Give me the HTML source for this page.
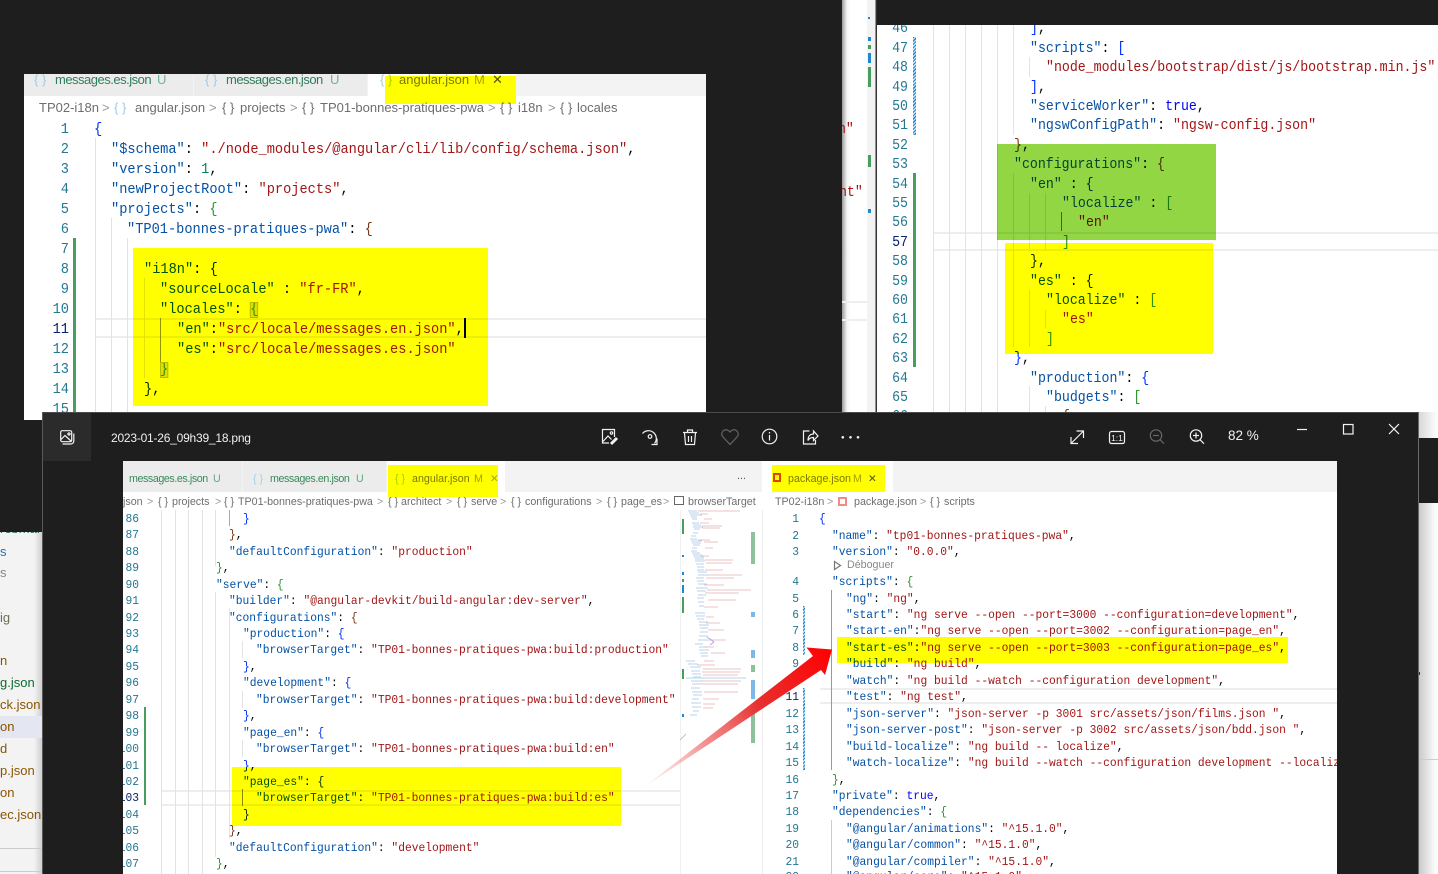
<!DOCTYPE html>
<html lang="en"><head><meta charset="utf-8"><title>Screenshot</title>
<style>
html,body{margin:0;padding:0;background:#1e1e1e;width:1438px;height:874px;overflow:hidden}
*{box-sizing:border-box}
#root{position:absolute;left:0;top:0;width:1438px;height:874px;overflow:hidden;background:#1e1e1e}
.c{position:absolute;left:0;top:0;width:1438px;height:874px}
.r{position:absolute}
p{position:absolute;margin:0;white-space:pre;font-family:"Liberation Mono",monospace;transform:scaleX(.917);transform-origin:0 0;color:#000}
p.n{width:40px;text-align:right;transform-origin:100% 0;color:#237893}
.p1 p{font-size:14.9px;line-height:20px;margin-top:2px}
.p2 p{font-size:14.45px;line-height:19.4px;margin-top:2.500px}
.p3 p{font-size:12.3px;line-height:16px;margin-top:1px}
i,s,em,u,b,tt{font:inherit;font-style:normal;font-weight:normal;text-decoration:none}
i{color:#0451a5}s{color:#a31515}em{color:#0000ff}u{color:#0431fa}b{color:#319331}tt{color:#7b3814}
.t{position:absolute;white-space:pre;font-family:"Liberation Sans",sans-serif;line-height:18px;color:#6e6e6e}
.f13 .t{font-size:13px;margin-top:1px}.f11 .t{font-size:10.7px;margin-top:1px}
.f13 .t.nr{letter-spacing:-.5px}.f11 .t.nr{letter-spacing:-.42px}
.m{position:absolute;mix-blend-mode:multiply}
.g{position:absolute;width:1px;background:#e3e3e3}
.side{position:absolute;left:0;font:13px/18px "Liberation Sans",sans-serif;white-space:pre}
</style></head><body><div id="root">

<!-- window behind, far right strip -->
<div class="r" style="left:842px;top:0;width:35px;height:420px;background:linear-gradient(90deg,#9a9a9a 0,#f4f4f4 5px,#fff 9px,#fff 25px,#f3f3f3 25px,#f3f3f3 33px,#333 34px)"></div>
<div class="r" style="left:842px;top:301px;width:25px;height:2px;background:#eee"></div>
<div class="r" style="left:842px;top:319px;width:25px;height:2px;background:#eee"></div>
<div class="r" style="left:868px;top:17px;width:2px;height:2px;background:#1e88d0"></div>
<div class="r" style="left:868px;top:37px;width:3px;height:4px;background:#1e88d0"></div>
<div class="r" style="left:868px;top:45px;width:3px;height:4px;background:#489e5e"></div>
<div class="r" style="left:868px;top:53px;width:3px;height:10px;background:#1e88d0"></div>
<div class="r" style="left:868px;top:67px;width:3px;height:20px;background:#489e5e"></div>
<div class="r" style="left:868px;top:155px;width:3px;height:12px;background:#489e5e"></div>
<div class="r" style="left:868px;top:209px;width:3px;height:4px;background:#1e88d0"></div>
<div class="c" style="clip-path:inset(0 571px 0 842px)"><div class="p2"><p style="left:830px;top:118px"><s>on"</s></p><p style="left:831px;top:181.500px"><s>ent"</s></p></div></div>

<!-- PANEL 1 -->
<div class="c f13 p1" style="clip-path:inset(74px 732px 454px 24px)">
<div class="r" style="left:24px;top:74px;width:682px;height:346px;background:#fff"></div>
<div class="r" style="left:24px;top:74px;width:682px;height:22px;background:#f3f3f3"></div>
<div class="r" style="left:24px;top:74px;width:169px;height:22px;background:#ececec"></div>
<div class="r" style="left:194px;top:74px;width:173px;height:22px;background:#ececec"></div>
<div class="r" style="left:368px;top:74px;width:148px;height:22px;background:#fff"></div>
<div class="t" style="left:34px;top:70px;color:#9fcbe6">{ }</div>
<div class="t nr" style="left:55px;top:70px;color:#2e7d5a">messages.es.json</div>
<div class="t" style="left:157px;top:70px;color:#73b48c">U</div>
<div class="t" style="left:205px;top:70px;color:#9fcbe6">{ }</div>
<div class="t nr" style="left:226px;top:70px;color:#2e7d5a">messages.en.json</div>
<div class="t" style="left:330px;top:70px;color:#73b48c">U</div>
<div class="t" style="left:380px;top:70px;color:#b0cfc0">{ }</div>
<div class="t" style="left:399px;top:70px;color:#7a7a7a">angular.json</div>
<div class="t" style="left:474px;top:70px;color:#b0a060">M</div>
<div class="t" style="left:492px;top:70px;color:#555">✕</div>

<div class="t" style="left:39px;top:98px">TP02-i18n</div>
<div class="t" style="left:102px;top:98px;color:#999">&gt;</div>
<div class="t" style="left:114px;top:98px;color:#9fcbe6">{ }</div>
<div class="t" style="left:135px;top:98px">angular.json</div>
<div class="t" style="left:209px;top:98px;color:#999">&gt;</div>
<div class="t" style="left:222px;top:98px">{ }</div>
<div class="t" style="left:240px;top:98px">projects</div>
<div class="t" style="left:290px;top:98px;color:#999">&gt;</div>
<div class="t" style="left:302px;top:98px">{ }</div>
<div class="t" style="left:320px;top:98px">TP01-bonnes-pratiques-pwa</div>
<div class="t" style="left:488px;top:98px;color:#999">&gt;</div>
<div class="t" style="left:500px;top:98px">{ }</div>
<div class="t" style="left:518px;top:98px">i18n</div>
<div class="t" style="left:548px;top:98px;color:#999">&gt;</div>
<div class="t" style="left:560px;top:98px">{ }</div>
<div class="t" style="left:577px;top:98px">locales</div>

<div class="r" style="left:95px;top:318px;width:611px;height:20px;border-top:2px solid #eee;border-bottom:2px solid #eee"></div>
<div class="g" style="left:95px;top:138px;height:280px"></div>
<div class="g" style="left:111px;top:218px;height:200px"></div>
<div class="g" style="left:127px;top:238px;height:180px"></div>
<div class="g" style="left:144px;top:278px;height:100px"></div>
<div class="g" style="left:160px;top:318px;height:60px;background:#939393"></div>
<div class="r" style="left:73px;top:238px;width:3px;height:180px;background:#489e5e"></div>

<p class="n" style="left:29px;top:118px">1</p><p class="n" style="left:29px;top:138px">2</p><p class="n" style="left:29px;top:158px">3</p><p class="n" style="left:29px;top:178px">4</p><p class="n" style="left:29px;top:198px">5</p><p class="n" style="left:29px;top:218px">6</p><p class="n" style="left:29px;top:238px">7</p><p class="n" style="left:29px;top:258px">8</p><p class="n" style="left:29px;top:278px">9</p><p class="n" style="left:29px;top:298px">10</p><p class="n" style="left:29px;top:318px;color:#0b216f">11</p><p class="n" style="left:29px;top:338px">12</p><p class="n" style="left:29px;top:358px">13</p><p class="n" style="left:29px;top:378px">14</p><p class="n" style="left:29px;top:398px">15</p>

<p style="left:94px;top:118px"><u>{</u></p>
<p style="left:111px;top:138px"><i>"$schema"</i>: <s>"./node_modules/@angular/cli/lib/config/schema.json"</s>,</p>
<p style="left:111px;top:158px"><i>"version"</i>: <tt style="color:#098658">1</tt>,</p>
<p style="left:111px;top:178px"><i>"newProjectRoot"</i>: <s>"projects"</s>,</p>
<p style="left:111px;top:198px"><i>"projects"</i>: <b>{</b></p>
<p style="left:127px;top:218px"><i>"TP01-bonnes-pratiques-pwa"</i>: <tt>{</tt></p>
<p style="left:144px;top:258px"><i>"i18n"</i>: <u>{</u></p>
<p style="left:160px;top:278px"><i>"sourceLocale"</i> : <s>"fr-FR"</s>,</p>
<p style="left:160px;top:298px"><i>"locales"</i>: <b style="background:#dedede;outline:1px solid #b9b9b9;outline-offset:-1px">{</b></p>
<p style="left:177px;top:318px"><i>"en"</i>:<s>"src/locale/messages.en.json"</s>,</p>
<p style="left:177px;top:338px"><i>"es"</i>:<s>"src/locale/messages.es.json"</s></p>
<p style="left:160px;top:358px"><b style="background:#dedede;outline:1px solid #b9b9b9;outline-offset:-1px">}</b></p>
<p style="left:144px;top:378px"><u>}</u>,</p>
<div class="r" style="left:464px;top:318px;width:2px;height:20px;background:#000"></div>
<div class="m" style="left:385px;top:76px;width:131px;height:28px;background:#ff0"></div>
<div class="m" style="left:133px;top:248px;width:355px;height:158px;background:#ff0"></div>
</div>

<!-- PANEL 2 -->
<div class="c p2" style="clip-path:inset(25px 0 436px 877px)">
<div class="r" style="left:877px;top:25px;width:561px;height:414px;background:#fff"></div>
<div class="r" style="left:933px;top:232px;width:505px;height:19px;border-top:2px solid #eee;border-bottom:2px solid #eee"></div>
<div class="g" style="left:933px;top:25px;height:390px"></div><div class="g" style="left:949px;top:25px;height:390px"></div><div class="g" style="left:965px;top:25px;height:390px"></div><div class="g" style="left:981px;top:25px;height:390px"></div><div class="g" style="left:997px;top:25px;height:390px"></div>
<div class="g" style="left:1013px;top:25px;height:110px"></div><div class="g" style="left:1013px;top:173px;height:174px"></div>
<div class="g" style="left:1029px;top:57px;height:20px"></div><div class="g" style="left:1029px;top:193px;height:58px"></div><div class="g" style="left:1029px;top:290px;height:57px"></div><div class="g" style="left:1029px;top:386px;height:30px"></div>
<div class="g" style="left:1045px;top:193px;height:57px"></div><div class="g" style="left:1045px;top:310px;height:18px"></div><div class="g" style="left:1045px;top:406px;height:10px"></div>
<div class="g" style="left:1061px;top:212px;height:19px;background:#777"></div>
<div class="r" style="left:913px;top:37px;width:3px;height:98px;background:repeating-linear-gradient(135deg,#1e88d0 0 1.2px,#cfe7f7 1.2px 2.4px)"></div>
<div class="r" style="left:913px;top:173px;width:3px;height:194px;background:#489e5e"></div>

<p class="n" style="left:868px;top:17.900px">46</p><p class="n" style="left:868px;top:37.300px">47</p><p class="n" style="left:868px;top:56.700px">48</p><p class="n" style="left:868px;top:76.100px">49</p><p class="n" style="left:868px;top:95.500px">50</p><p class="n" style="left:868px;top:114.900px">51</p><p class="n" style="left:868px;top:134.300px">52</p><p class="n" style="left:868px;top:153.700px">53</p><p class="n" style="left:868px;top:173.100px">54</p><p class="n" style="left:868px;top:192.500px">55</p><p class="n" style="left:868px;top:211.900px">56</p><p class="n" style="left:868px;top:231.300px;color:#0b216f">57</p><p class="n" style="left:868px;top:250.700px">58</p><p class="n" style="left:868px;top:270.100px">59</p><p class="n" style="left:868px;top:289.500px">60</p><p class="n" style="left:868px;top:308.900px">61</p><p class="n" style="left:868px;top:328.300px">62</p><p class="n" style="left:868px;top:347.700px">63</p><p class="n" style="left:868px;top:367.100px">64</p><p class="n" style="left:868px;top:386.500px">65</p><p class="n" style="left:868px;top:405.900px">66</p>

<p style="left:1030px;top:17.900px"><u>]</u>,</p>
<p style="left:1030px;top:37.300px"><i>"scripts"</i>: <u>[</u></p>
<p style="left:1046px;top:56.700px"><s>"node_modules/bootstrap/dist/js/bootstrap.min.js"</s></p>
<p style="left:1030px;top:76.100px"><u>]</u>,</p>
<p style="left:1030px;top:95.500px"><i>"serviceWorker"</i>: <em>true</em>,</p>
<p style="left:1030px;top:114.900px"><i>"ngswConfigPath"</i>: <s>"ngsw-config.json"</s></p>
<p style="left:1014px;top:134.300px"><tt>}</tt>,</p>
<p style="left:1014px;top:153.700px"><i>"configurations"</i>: <tt>{</tt></p>
<p style="left:1030px;top:173.100px"><i>"en"</i> : <u>{</u></p>
<p style="left:1062px;top:192.500px"><i>"localize"</i> : <b>[</b></p>
<p style="left:1078px;top:211.900px"><s>"en"</s></p>
<p style="left:1062px;top:231.300px"><b>]</b></p>
<p style="left:1030px;top:250.700px"><u>}</u>,</p>
<p style="left:1030px;top:270.100px"><i>"es"</i> : <u>{</u></p>
<p style="left:1046px;top:289.500px"><i>"localize"</i> : <b>[</b></p>
<p style="left:1062px;top:308.900px"><s>"es"</s></p>
<p style="left:1046px;top:328.300px"><b>]</b></p>
<p style="left:1014px;top:347.700px"><u>}</u>,</p>
<p style="left:1030px;top:367.100px"><i>"production"</i>: <u>{</u></p>
<p style="left:1046px;top:386.500px"><i>"budgets"</i>: <b>[</b></p>
<p style="left:1062px;top:405.900px"><tt>{</tt></p>
<div class="m" style="left:997px;top:144px;width:219px;height:96px;background:#93d644"></div>
<div class="m" style="left:1005px;top:243px;width:208px;height:111px;background:#ff0"></div>
</div>

<!-- behind, left sidebar -->
<div class="r" style="left:0;top:532px;width:42px;height:342px;background:linear-gradient(90deg,#f3f3f3 0,#f3f3f3 34px,#cfcfcf 42px);overflow:hidden">
<div class="r" style="left:0;top:184px;width:42px;height:22px;background:#e4e6f1"></div>
<div class="r" style="left:0;top:316px;width:42px;height:1px;background:#ccc"></div>
<div class="r" style="left:0;top:339px;width:42px;height:1px;background:#ccc"></div>
<div class="side" style="top:-12px;color:#2c6c4a">rebman</div>
<div class="side" style="top:11px;color:#2272b5">s</div>
<div class="side" style="top:32px;color:#888">s</div>
<div class="side" style="top:77px;color:#6f6f55">ig</div>
<div class="side" style="top:120px;color:#895503">n</div>
<div class="side" style="top:142px;color:#106a2e">g.json</div>
<div class="side" style="top:164px;color:#895503">ck.json</div>
<div class="side" style="top:186px;color:#895503">on</div>
<div class="side" style="top:208px;color:#895503">d</div>
<div class="side" style="top:230px;color:#895503">p.json</div>
<div class="side" style="top:252px;color:#895503">on</div>
<div class="side" style="top:274px;color:#895503">ec.json</div>
</div>

<!-- right behind -->
<div class="r" style="left:1418px;top:412px;width:20px;height:26px;background:linear-gradient(90deg,#d6d6d6,#fff)"></div>
<div class="r" style="left:1418px;top:438px;width:20px;height:65px;background:#1e1e1e"></div>
<div class="r" style="left:1418px;top:503px;width:20px;height:371px;background:linear-gradient(90deg,#c6c6c6,#f8f8f8 16px,#fff)"></div>
<div class="r" style="left:1418px;top:759px;width:20px;height:1px;background:#ccc"></div>
<div class="r" style="left:1418px;top:672px;width:2px;height:3px;background:#003b9c"></div>

<!-- PHOTOS WINDOW -->
<div class="r" style="left:42px;top:412px;width:1377px;height:462px;background:#1e1e1e;border-top:1px solid #4a4a4a;border-left:1px solid #5a5a5a;border-right:1px solid #6a6a6a"></div>
<div class="r" style="left:43px;top:413px;width:48px;height:48px;background:#2b2b2b"></div>
<div class="t" style="left:111px;top:429px;color:#f0f0f0;font-size:12px;letter-spacing:-.22px">2023-01-26_09h39_18.png</div>
<div class="t" style="left:1228px;top:427px;color:#f0f0f0;font-size:13.5px">82 %</div>

<svg class="c" width="1438" height="874" viewBox="0 0 1438 874" fill="none" stroke="#f2f2f2" stroke-width="1.2">
<rect x="60.700" y="430.700" width="11" height="11" rx="1.500"/><path d="M73.800 433.500v7.500a3 3 0 0 1-3 3H62.500M61 439.500l4-4 6.500 6M69 432v4M67 434h4"/>
<path d="M614.500 437V429.500H602.500V443H609M603 441.500l5-5.500 3.500 3.500"/><circle cx="611.500" cy="433" r="1.200"/><path d="M611 444l6-6" stroke-width="3"/>
<path d="M642.500 433.500A7.700 7.700 0 1 1 654.500 443.500"/><circle cx="650" cy="436.500" r="1.800"/><path d="M657 438.500v6h-5.500"/>
<path d="M683 432.500h14M687.500 432v-2h5v2M684.500 433l1 11.500h9l1-11.500M688.500 436v6M691.500 436v6"/>
<path d="M730 444.500l-7-7.500a4.200 4.200 0 0 1 6-6l1 1 1-1a4.200 4.200 0 0 1 6 6z" stroke="#666"/>
<circle cx="769.500" cy="436.500" r="7.300"/><path d="M769.500 435v5.500M769.500 432v1.500"/>
<path d="M809.500 431h-6v13h12v-4M808 440.500c0-4 2-6.500 5.500-6.500v-3l4.500 5-4.500 4.500v-3c-2.500 0-4.500 1-5.500 3z"/>
<g fill="#f2f2f2" stroke="none"><circle cx="842.800" cy="437.300" r="1.300"/><circle cx="850.500" cy="437.300" r="1.300"/><circle cx="858" cy="437.300" r="1.300"/></g>
<path d="M1071 443.500L1083.500 431M1076.500 431h7v7M1071 437v6.500h7"/>
<rect x="1109.500" y="431.500" width="15" height="12" rx="2"/>
<text x="1117" y="441" text-anchor="middle" font-family="Liberation Sans, sans-serif" font-size="8.500" fill="#f2f2f2" stroke="none">1:1</text>
<g stroke="#666"><circle cx="1156" cy="435.500" r="5.700"/><path d="M1160 439.700l4 4M1153 435.500h6"/></g>
<circle cx="1196" cy="435.500" r="5.700"/><path d="M1200 439.700l4 4M1193 435.500h6M1196 432.500v6"/>
<path d="M1297 429.500h10"/><rect x="1343.500" y="424.500" width="9.500" height="9.500"/><path d="M1389 424l10 10M1399 424l-10 10"/>
</svg>

<!-- PANEL 3 -->
<div class="c f11 p3" style="clip-path:inset(461px 676px 0 123px)">
<div class="r" style="left:123px;top:461px;width:640px;height:413px;background:#fff"></div>
<div class="r" style="left:123px;top:461px;width:640px;height:31px;background:#f3f3f3"></div>
<div class="r" style="left:123px;top:461px;width:119px;height:31px;background:#ececec"></div>
<div class="r" style="left:243px;top:461px;width:143px;height:31px;background:#ececec"></div>
<div class="r" style="left:387px;top:461px;width:118px;height:31px;background:#fff"></div>
<div class="t nr" style="left:129px;top:469px;color:#388a5a">messages.es.json</div>
<div class="t" style="left:213px;top:469px;color:#5ca97b">U</div>
<div class="t" style="left:253px;top:469px;color:#9fd3ea">{ }</div>
<div class="t nr" style="left:270px;top:469px;color:#388a5a">messages.en.json</div>
<div class="t" style="left:356px;top:469px;color:#5ca97b">U</div>
<div class="t" style="left:395px;top:469px;color:#9fd3ea">{ }</div>
<div class="t" style="left:412px;top:469px;color:#7a7a7a">angular.json</div>
<div class="t" style="left:474px;top:469px;color:#a89c60">M</div>
<div class="t" style="left:490px;top:469px;color:#aaa">✕</div>
<div class="t" style="left:737px;top:466px;color:#555">...</div>

<div class="t" style="left:123px;top:492px">json</div><div class="t" style="left:147px;top:492px;color:#999">&gt;</div>
<div class="t" style="left:158px;top:492px">{ }</div><div class="t" style="left:172px;top:492px">projects</div><div class="t" style="left:215px;top:492px;color:#999">&gt;</div>
<div class="t" style="left:224px;top:492px">{ }</div><div class="t" style="left:238px;top:492px">TP01-bonnes-pratiques-pwa</div><div class="t" style="left:377px;top:492px;color:#999">&gt;</div>
<div class="t" style="left:388px;top:492px">{ }</div><div class="t" style="left:401px;top:492px">architect</div><div class="t" style="left:446px;top:492px;color:#999">&gt;</div>
<div class="t" style="left:457px;top:492px">{ }</div><div class="t" style="left:471px;top:492px">serve</div><div class="t" style="left:500px;top:492px;color:#999">&gt;</div>
<div class="t" style="left:511px;top:492px">{ }</div><div class="t" style="left:525px;top:492px">configurations</div><div class="t" style="left:596px;top:492px;color:#999">&gt;</div>
<div class="t" style="left:607px;top:492px">{ }</div><div class="t" style="left:621px;top:492px">page_es</div><div class="t" style="left:663px;top:492px;color:#999">&gt;</div>
<div class="r" style="left:674px;top:496px;width:10px;height:9px;border:1px solid #666"></div><div class="t" style="left:688px;top:492px">browserTarget</div>

<div class="r" style="left:161px;top:790px;width:519px;height:16px;border-top:2px solid #eee;border-bottom:2px solid #eee"></div>
<div class="g" style="left:161px;top:510px;height:364px"></div><div class="g" style="left:175px;top:510px;height:364px"></div><div class="g" style="left:188px;top:510px;height:364px"></div><div class="g" style="left:202px;top:510px;height:364px"></div>
<div class="g" style="left:215px;top:510px;height:56px"></div><div class="g" style="left:215px;top:592px;height:265px"></div>
<div class="g" style="left:229px;top:510px;height:16px;background:#aaa"></div><div class="g" style="left:229px;top:608px;height:230px"></div>
<div class="g" style="left:242px;top:641px;height:17px"></div><div class="g" style="left:242px;top:691px;height:17px"></div><div class="g" style="left:242px;top:740px;height:17px"></div><div class="g" style="left:242px;top:789px;height:17px;background:#888"></div>
<div class="r" style="left:144px;top:707px;width:2px;height:98px;background:#489e5e"></div>

<p class="n" style="left:99px;top:510px">86</p><p class="n" style="left:99px;top:526.400px">87</p><p class="n" style="left:99px;top:542.900px">88</p><p class="n" style="left:99px;top:559.300px">89</p><p class="n" style="left:99px;top:575.700px">90</p><p class="n" style="left:99px;top:592.200px">91</p><p class="n" style="left:99px;top:608.600px">92</p><p class="n" style="left:99px;top:625px">93</p><p class="n" style="left:99px;top:641.400px">94</p><p class="n" style="left:99px;top:657.900px">95</p><p class="n" style="left:99px;top:674.300px">96</p><p class="n" style="left:99px;top:690.700px">97</p><p class="n" style="left:99px;top:707.200px">98</p><p class="n" style="left:99px;top:723.600px">99</p><p class="n" style="left:99px;top:740px">100</p><p class="n" style="left:99px;top:756.500px">101</p><p class="n" style="left:99px;top:772.900px">102</p><p class="n" style="left:99px;top:789.300px;color:#0b216f">103</p><p class="n" style="left:99px;top:805.700px">104</p><p class="n" style="left:99px;top:822.200px">105</p><p class="n" style="left:99px;top:838.600px">106</p><p class="n" style="left:99px;top:855px">107</p>

<p style="left:243px;top:510px"><u>}</u></p>
<p style="left:229px;top:526.400px"><tt>}</tt>,</p>
<p style="left:229px;top:542.900px"><i>"defaultConfiguration"</i>: <s>"production"</s></p>
<p style="left:216px;top:559.300px"><b>}</b>,</p>
<p style="left:216px;top:575.700px"><i>"serve"</i>: <b>{</b></p>
<p style="left:229px;top:592.200px"><i>"builder"</i>: <s>"@angular-devkit/build-angular:dev-server"</s>,</p>
<p style="left:229px;top:608.600px"><i>"configurations"</i>: <tt>{</tt></p>
<p style="left:243px;top:625px"><i>"production"</i>: <u>{</u></p>
<p style="left:256px;top:641.400px"><i>"browserTarget"</i>: <s>"TP01-bonnes-pratiques-pwa:build:production"</s></p>
<p style="left:243px;top:657.900px"><u>}</u>,</p>
<p style="left:243px;top:674.300px"><i>"development"</i>: <u>{</u></p>
<p style="left:256px;top:690.700px"><i>"browserTarget"</i>: <s>"TP01-bonnes-pratiques-pwa:build:development"</s></p>
<p style="left:243px;top:707.200px"><u>}</u>,</p>
<p style="left:243px;top:723.600px"><i>"page_en"</i>: <u>{</u></p>
<p style="left:256px;top:740px"><i>"browserTarget"</i>: <s>"TP01-bonnes-pratiques-pwa:build:en"</s></p>
<p style="left:243px;top:756.500px"><u>}</u>,</p>
<p style="left:243px;top:772.900px"><i>"page_es"</i>: <u>{</u></p>
<p style="left:256px;top:789.300px"><i>"browserTarget"</i>: <s>"TP01-bonnes-pratiques-pwa:build:es"</s></p>
<p style="left:243px;top:805.700px"><u>}</u></p>
<p style="left:229px;top:822.200px"><tt>}</tt>,</p>
<p style="left:229px;top:838.600px"><i>"defaultConfiguration"</i>: <s>"development"</s></p>
<p style="left:216px;top:855px"><b>}</b>,</p>

<!-- minimap -->
<div class="r" style="left:680px;top:510px;width:83px;height:364px;background:#fff;border-left:1px solid #f0f0f0"></div>
<svg class="c" width="1438" height="874" viewBox="0 0 1438 874" fill="none" stroke-width=".8" opacity=".75">
<path stroke="#84acd6" d="M688 511h9M689 513h10M690 515h12M691 517h6M692 519h5M692 523h7M693 525h8M693 527h10M694 529h6M693 533h5M691 536h5M690 539h7M691 541h11M692 543h9M693 545h7M692 548h5M691 551h6M692 553h8M693 555h9M694 557h10M695 559h9M695 561h10M696 564h8M697 567h7M697 570h7M698 572h9M698 575h10M696 578h8M697 581h7M698 584h9M696 588h12M697 591h9M698 595h8M697 598h7M698 602h6M699 606h5M695 613h10M696 616h9M697 619h7M699 622h9M699 625h10M700 628h8M700 632h8M699 636h9M698 640h10M695 644h8M699 647h9M699 650h10M700 653h8M701 656h7M686 661h9M688 664h10M690 667h11M691 671h9M692 674h9M693 677h8M691 681h11M692 684h10M691 688h9M692 692h10M693 695h9M692 699h7M691 703h10M692 707h9M693 711h6M690 715h7"/>
<path stroke="#d69898" d="M698 511h42M700 514h8M704 519h8M700 523h9M702 526h20M702 528h18M698 540h12M704 542h14M705 548h8M701 556h8M705 560h28M706 563h26M705 570h18M708 575h34M706 578h28M704 585h20M707 590h44M705 593h34M708 600h28M704 607h14M706 617h8M706 623h14M708 630h16M708 640h18M704 647h10M711 653h14M704 661h10M697 665h18M703 669h38M702 672h38M703 675h35M701 681h40M702 684h36M704 692h34M703 699h16M703 704h12M703 708h10"/>
<path stroke="#8b7df0" d="M710 639l4 3M710 645l4-3M707 637l6 4"/>
<path stroke="#999" d="M686 734l-6 6"/>
<path stroke="#bcd9ef" d="M686 678h60" stroke-width="1.500"/>
</svg>
<div class="r" style="left:682px;top:519px;width:2px;height:15px;background:#489e5e"></div>
<div class="r" style="left:682px;top:555px;width:2px;height:2px;background:#1e88d0"></div>
<div class="r" style="left:682px;top:572px;width:2px;height:3px;background:#1e88d0"></div>
<div class="r" style="left:682px;top:579px;width:2px;height:3px;background:#489e5e"></div>
<div class="r" style="left:682px;top:585px;width:2px;height:8px;background:#1e88d0"></div>
<div class="r" style="left:682px;top:597px;width:2px;height:16px;background:#489e5e"></div>
<div class="r" style="left:682px;top:669px;width:2px;height:10px;background:#489e5e"></div>
<div class="r" style="left:682px;top:714px;width:2px;height:3px;background:#1e88d0"></div>
<div class="r" style="left:751px;top:532px;width:4px;height:32px;background:#8fc09c"></div>
<div class="r" style="left:751px;top:612px;width:4px;height:5px;background:#7db8e8"></div>
<div class="r" style="left:751px;top:650px;width:4px;height:8px;background:#7db8e8"></div>
<div class="r" style="left:751px;top:665px;width:4px;height:7px;background:#8fc09c"></div>
<div class="r" style="left:751px;top:680px;width:4px;height:19px;background:#7db8e8"></div>
<div class="r" style="left:751px;top:706px;width:4px;height:37px;background:#8fc09c"></div>
<div class="m" style="left:388px;top:465px;width:110px;height:32px;background:#ff0"></div>
<div class="m" style="left:232px;top:767px;width:389px;height:59px;background:#ff0"></div>
</div>

<!-- PANEL 4 -->
<div class="c f11 p3" style="clip-path:inset(461px 101px 0 762px)">
<div class="r" style="left:762px;top:461px;width:575px;height:413px;background:#fff"></div>
<div class="r" style="left:762px;top:461px;width:575px;height:31px;background:#f3f3f3"></div>
<div class="r" style="left:762px;top:461px;width:131px;height:31px;background:#fff"></div>
<div class="r" style="left:762px;top:510px;width:1px;height:364px;background:#eee"></div>
<div class="r" style="left:773px;top:473px;width:8px;height:9px;border:2px solid #e0412c;border-top-width:2px;background:#fff"></div>
<div class="t" style="left:788px;top:469px;color:#7a7a7a">package.json</div>
<div class="t" style="left:853px;top:469px;color:#a89c60">M</div>
<div class="t" style="left:868px;top:469px;color:#555">✕</div>
<div class="t" style="left:775px;top:492px">TP02-i18n</div><div class="t" style="left:827px;top:492px;color:#999">&gt;</div>
<div class="r" style="left:838px;top:497px;width:9px;height:9px;border:2px solid #f28a8a;background:#fff"></div>
<div class="t" style="left:854px;top:492px">package.json</div><div class="t" style="left:920px;top:492px;color:#999">&gt;</div>
<div class="t" style="left:930px;top:492px">{ }</div><div class="t" style="left:944px;top:492px">scripts</div>

<div class="r" style="left:820px;top:688px;width:517px;height:16px;border-top:2px solid #eee;border-bottom:2px solid #eee"></div>
<div class="r" style="left:831px;top:590px;width:1px;height:180px;background:#999"></div>
<div class="r" style="left:831px;top:820px;width:1px;height:54px;background:#ccc"></div>
<div class="r" style="left:803px;top:606px;width:2px;height:49px;background:repeating-linear-gradient(135deg,#1e88d0 0 1.200px,#cfe7f7 1.200px 2.400px)"></div>
<div class="r" style="left:803px;top:688px;width:2px;height:82px;background:repeating-linear-gradient(135deg,#1e88d0 0 1.200px,#cfe7f7 1.200px 2.400px)"></div>

<p class="n" style="left:759px;top:510px">1</p><p class="n" style="left:759px;top:526.500px">2</p><p class="n" style="left:759px;top:543px">3</p><p class="n" style="left:759px;top:573px">4</p><p class="n" style="left:759px;top:589.500px">5</p><p class="n" style="left:759px;top:606px">6</p><p class="n" style="left:759px;top:622.400px">7</p><p class="n" style="left:759px;top:638.900px">8</p><p class="n" style="left:759px;top:655.300px">9</p><p class="n" style="left:759px;top:671.800px">10</p><p class="n" style="left:759px;top:688.200px;color:#0b216f">11</p><p class="n" style="left:759px;top:704.700px">12</p><p class="n" style="left:759px;top:721.100px">13</p><p class="n" style="left:759px;top:737.600px">14</p><p class="n" style="left:759px;top:754px">15</p><p class="n" style="left:759px;top:770.500px">16</p><p class="n" style="left:759px;top:787px">17</p><p class="n" style="left:759px;top:803.400px">18</p><p class="n" style="left:759px;top:819.900px">19</p><p class="n" style="left:759px;top:836.300px">20</p><p class="n" style="left:759px;top:852.800px">21</p><p class="n" style="left:759px;top:868.200px">22</p>

<p style="left:819px;top:510px"><u>{</u></p>
<p style="left:832px;top:526.500px"><i>"name"</i>: <s>"tp01-bonnes-pratiques-pwa"</s>,</p>
<p style="left:832px;top:543px"><i>"version"</i>: <s>"0.0.0"</s>,</p>
<svg class="r" style="left:833px;top:560px" width="9" height="11" fill="none" stroke="#777" stroke-width="1.200"><path d="M1.500 1.500v8l6-4z"/></svg>
<div class="t" style="left:847px;top:555px;color:#888">Déboguer</div>
<p style="left:832px;top:573px"><i>"scripts"</i>: <b>{</b></p>
<p style="left:846px;top:589.500px"><i>"ng"</i>: <s>"ng"</s>,</p>
<p style="left:846px;top:606px"><i>"start"</i>: <s>"ng serve --open --port=3000 --configuration=development"</s>,</p>
<p style="left:846px;top:622.400px"><i>"start-en"</i>:<s>"ng serve --open --port=3002 --configuration=page_en"</s>,</p>
<p style="left:846px;top:638.900px"><i>"start-es"</i>:<s>"ng serve --open --port=3003 --configuration=page_es"</s>,</p>
<p style="left:846px;top:655.300px"><i>"build"</i>: <s>"ng build"</s>,</p>
<p style="left:846px;top:671.800px"><i>"watch"</i>: <s>"ng build --watch --configuration development"</s>,</p>
<p style="left:846px;top:688.200px"><i>"test"</i>: <s>"ng test"</s>,</p>
<p style="left:846px;top:704.700px"><i>"json-server"</i>: <s>"json-server -p 3001 src/assets/json/films.json "</s>,</p>
<p style="left:846px;top:721.100px"><i>"json-server-post"</i>: <s>"json-server -p 3002 src/assets/json/bdd.json "</s>,</p>
<p style="left:846px;top:737.600px"><i>"build-localize"</i>: <s>"ng build -- localize"</s>,</p>
<p style="left:846px;top:754px"><i>"watch-localize"</i>: <s>"ng build --watch --configuration development --localize"</s>,</p>
<p style="left:832px;top:770.500px"><b>}</b>,</p>
<p style="left:832px;top:787px"><i>"private"</i>: <em>true</em>,</p>
<p style="left:832px;top:803.400px"><i>"dependencies"</i>: <b>{</b></p>
<p style="left:846px;top:819.900px"><i>"@angular/animations"</i>: <s>"^15.1.0"</s>,</p>
<p style="left:846px;top:836.300px"><i>"@angular/common"</i>: <s>"^15.1.0"</s>,</p>
<p style="left:846px;top:852.800px"><i>"@angular/compiler"</i>: <s>"^15.1.0"</s>,</p>
<p style="left:846px;top:868.200px"><i>"@angular/core"</i>: <s>"^15.1.0"</s>,</p>
<div class="m" style="left:772px;top:465px;width:113px;height:27px;background:#ff0"></div>
<div class="m" style="left:837px;top:637px;width:451px;height:26px;background:#ff0"></div>
</div>

<!-- red arrow -->
<svg class="c" width="1438" height="874" viewBox="0 0 1438 874">
<defs><linearGradient id="ar" gradientUnits="userSpaceOnUse" x1="647" y1="786" x2="832" y2="650">
<stop offset="0" stop-color="#f5a0a0" stop-opacity=".1"/><stop offset=".3" stop-color="#f07a7a" stop-opacity=".8"/><stop offset=".6" stop-color="#e83030"/><stop offset="1" stop-color="#ff0000"/></linearGradient></defs>
<path d="M832 649.500L806.500 647.500 813 656 644 787 821 670 825 675z" fill="url(#ar)"/>
</svg>
</div></body></html>
